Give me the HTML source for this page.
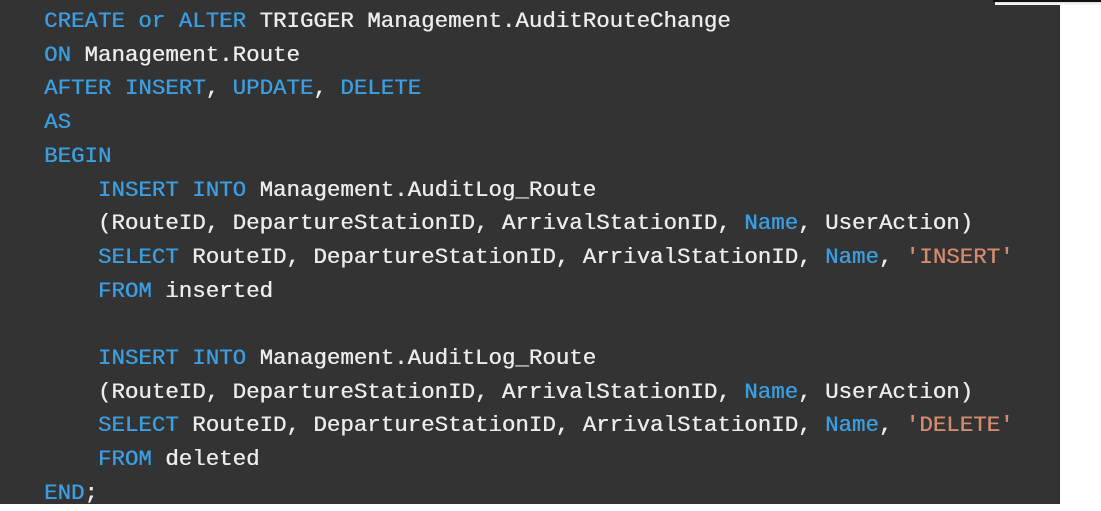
<!DOCTYPE html>
<html><head><meta charset="utf-8"><style>
html,body{margin:0;padding:0;width:1101px;height:504px;overflow:hidden;background:#fff;}
#p{position:absolute;left:0;top:0;width:1060px;height:504px;background:#333333;}
#line{position:absolute;left:993px;top:0;width:108px;height:2px;background:#111;}
#sh{position:absolute;left:995px;top:2px;width:106px;height:3px;background:linear-gradient(#ddd,#fff);}
pre{position:absolute;left:44px;top:5px;margin:0;font-family:"Liberation Mono",monospace;font-size:22.45px;line-height:33.7px;color:#ececec;text-shadow:0.4px 0 0 currentColor;}
.k{color:#3a9ee0}.s{color:#d58a6e}
</style></head><body>
<div id="p"></div><div id="line"></div><div id="sh"></div>
<pre><span class="k">CREATE or ALTER</span> TRIGGER Management.AuditRouteChange
<span class="k">ON</span> Management.Route
<span class="k">AFTER INSERT</span>, <span class="k">UPDATE</span>, <span class="k">DELETE</span>
<span class="k">AS</span>
<span class="k">BEGIN</span>
    <span class="k">INSERT INTO</span> Management.AuditLog_Route
    (RouteID, DepartureStationID, ArrivalStationID, <span class="k">Name</span>, UserAction)
    <span class="k">SELECT</span> RouteID, DepartureStationID, ArrivalStationID, <span class="k">Name</span>, <span class="s">'INSERT'</span>
    <span class="k">FROM</span> inserted

    <span class="k">INSERT INTO</span> Management.AuditLog_Route
    (RouteID, DepartureStationID, ArrivalStationID, <span class="k">Name</span>, UserAction)
    <span class="k">SELECT</span> RouteID, DepartureStationID, ArrivalStationID, <span class="k">Name</span>, <span class="s">'DELETE'</span>
    <span class="k">FROM</span> deleted
<span class="k">END</span>;</pre>
</body></html>
